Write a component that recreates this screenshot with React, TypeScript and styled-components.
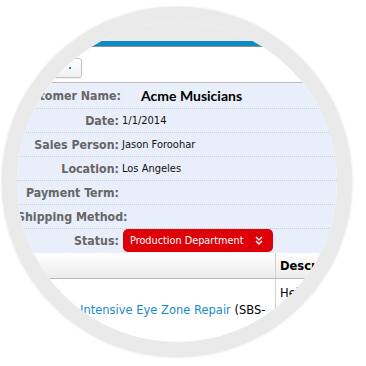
import React from "react";
import styled, { createGlobalStyle } from "styled-components";

const GlobalStyle = createGlobalStyle`
  html, body { margin: 0; padding: 0; background: #fff; }
  body { width: 366px; height: 366px; overflow: hidden; font-family: "DejaVu Sans", sans-serif; }
`;

const Stage = styled.div`
  width: 366px;
  height: 366px;
  box-sizing: border-box;
  padding: 7px 0 0 2px;
  background: #fff;
`;

const Lens = styled.div`
  width: 320px;
  height: 320px;
  border: 15px solid #eaeaea;
  border-radius: 50%;
  overflow: hidden;
  background: #fff;
  box-shadow: 0 0 3px rgba(0, 0, 0, 0.14);
  display: flex;
  flex-direction: column;
`;

const TopStrip = styled.div`
  height: 19px;
  flex: none;
  background: #eaeaea;
`;

const BlueBar = styled.div`
  height: 5px;
  flex: none;
  background: #0b8cc4;
  border-bottom: 1px solid #8e8e8e;
`;

const Toolbar = styled.div`
  height: 36px;
  flex: none;
  box-sizing: border-box;
  padding-top: 11px;
  border-bottom: 1px solid #bdbdbd;
  display: flex;
`;

const ToolButton = styled.div`
  width: 75px;
  height: 20px;
  margin-left: -10px;
  box-sizing: border-box;
  border: 1px solid #c4c4c4;
  border-radius: 3px;
  background: linear-gradient(#ffffff, #f0f0f0);
  box-shadow: 0 1px 1px rgba(0, 0, 0, 0.08);
  display: flex;
  align-items: center;
  justify-content: flex-end;
  padding-right: 10px;
`;

const Dot = styled.span`
  width: 2px;
  height: 2px;
  background: #1a8fd0;
`;

const Form = styled.div`
  flex: none;
  background: #e8eefa;
  display: flex;
  flex-direction: column;
`;

const Row = styled.div<{ $h: number; $last?: boolean }>`
  height: ${(p) => p.$h}px;
  box-sizing: border-box;
  border-bottom: 1px dotted ${(p) => (p.$last ? "transparent" : "#c9cdd6")};
  display: grid;
  grid-template-columns: 102px 1fr;
  column-gap: 3px;
  align-items: center;
`;

const Label = styled.div`
  text-align: right;
  font-family: "DejaVu Sans Condensed", "DejaVu Sans", sans-serif;
  font-stretch: condensed;
  font-weight: bold;
  font-size: 12.3px;
  color: #666;
  white-space: nowrap;
`;

const Value = styled.div`
  font-family: "DejaVu Sans Condensed", "DejaVu Sans", sans-serif;
  font-stretch: condensed;
  font-size: 11px;
  color: #111;
  white-space: nowrap;
`;

const BigValue = styled.div`
  margin-left: 19px;
  font-family: Lato, "Open Sans", sans-serif;
  font-weight: bold;
  font-size: 14px;
  color: #000;
  white-space: nowrap;
`;

const StatusSelect = styled.div`
  align-self: start;
  margin-left: 1px;
  width: 150px;
  height: 23px;
  box-sizing: border-box;
  border-radius: 5px;
  background: #dd0008;
  color: #fff;
  display: flex;
  align-items: center;
  justify-content: space-between;
  padding: 0 10px 0 7px;
  font-family: "DejaVu Sans Condensed", "DejaVu Sans", sans-serif;
  font-stretch: condensed;
  font-size: 10.8px;
  white-space: nowrap;
`;

const Table = styled.div`
  flex: none;
  display: flex;
  flex-direction: column;
`;

const HeadRow = styled.div`
  height: 26px;
  box-sizing: border-box;
  border-bottom: 1px solid #bcbcbc;
  background: linear-gradient(#ffffff, #ececec);
  display: grid;
  grid-template-columns: 258px 1fr;
`;

const HeadCell = styled.div<{ $divider?: boolean }>`
  border-left: ${(p) => (p.$divider ? "1px solid #d0d0d0" : "none")};
  padding-left: 4px;
  display: flex;
  align-items: center;
  font-family: "DejaVu Sans", sans-serif;
  font-weight: bold;
  font-size: 11.5px;
  color: #000;
  white-space: nowrap;
`;

const BodyRow = styled.div`
  display: grid;
  grid-template-columns: 258px 1fr;
`;

const Cell = styled.div<{ $divider?: boolean }>`
  border-left: ${(p) => (p.$divider ? "1px solid #d0d0d0" : "none")};
  padding: 3px 0 3px 4px;
  display: flex;
  flex-direction: column;
  justify-content: center;
  font-family: "DejaVu Sans", sans-serif;
  font-size: 11.5px;
  line-height: 14px;
  color: #000;
  white-space: nowrap;
`;

const ProductCell = styled(Cell)`
  padding-left: 63px;
  justify-content: flex-start;
  padding-top: 24px;
`;

const Link = styled.span`
  color: #1a8cc8;
`;

const Chevrons = () => (
  <svg width="8" height="9" viewBox="0 0 8 9" fill="none" stroke="#fff" strokeWidth="1.4">
    <path d="M1 1 L4 4 L7 1" />
    <path d="M1 5 L4 8 L7 5" />
  </svg>
);

const rows: { label: string; value?: string }[] = [
  { label: "Date:", value: "1/1/2014" },
  { label: "Sales Person:", value: "Jason Foroohar" },
  { label: "Location:", value: "Los Angeles" },
  { label: "Payment Term:" },
  { label: "Shipping Method:" },
];

export default function App() {
  return (
    <>
      <GlobalStyle />
      <Stage>
        <Lens>
          <TopStrip />
          <BlueBar />
          <Toolbar>
            <ToolButton>
              <Dot />
            </ToolButton>
          </Toolbar>
          <Form>
            <Row $h={26}>
              <Label>Customer Name:</Label>
              <BigValue>Acme Musicians</BigValue>
            </Row>
            {rows.map((r) => (
              <Row $h={24} key={r.label}>
                <Label>{r.label}</Label>
                <Value>{r.value ?? ""}</Value>
              </Row>
            ))}
            <Row $h={24} $last>
              <Label>Status:</Label>
              <StatusSelect>
                <span>Production Department</span>
                <Chevrons />
              </StatusSelect>
            </Row>
          </Form>
          <Table>
            <HeadRow>
              <HeadCell />
              <HeadCell $divider>Descri</HeadCell>
            </HeadRow>
            <BodyRow>
              <ProductCell>
                <span>
                  <Link>Intensive Eye Zone Repair</Link> (SBS-
                </span>
              </ProductCell>
              <Cell $divider>
                <span>Help</span>
                <span>w</span>
              </Cell>
            </BodyRow>
          </Table>
        </Lens>
      </Stage>
    </>
  );
}
